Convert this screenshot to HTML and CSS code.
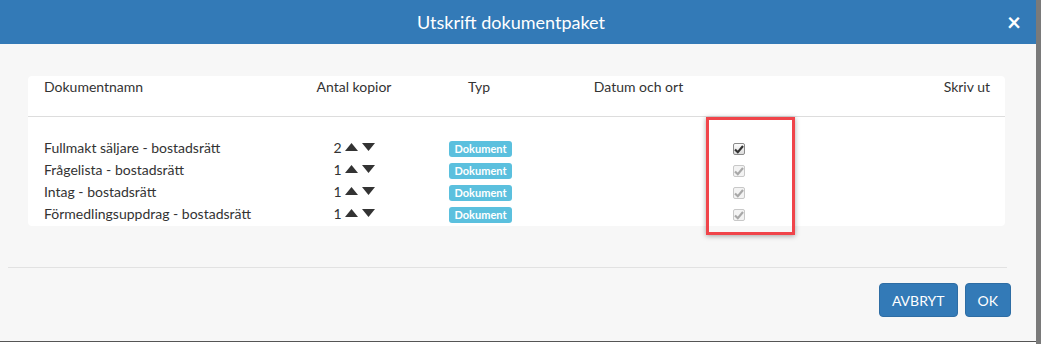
FILE: index.html
```html
<!DOCTYPE html>
<html lang="sv">
<head>
    <meta charset="UTF-8">
    <meta name="viewport" content="width=device-width, initial-scale=1.0">
    <title>Utskrift dokumentpaket</title>
    <link rel="stylesheet" href="styles.css">
</head>
<body>
    <div class="modal">
        <div class="modal-header">
            <h4 class="modal-title">Utskrift dokumentpaket</h4>
            <button class="close">&times;</button>
        </div>
        <div class="modal-body">
            <div class="card">
                <div class="row head">
                    <div class="col-name">Dokumentnamn</div>
                    <div class="col-center">Antal kopior</div>
                    <div class="col-center">Typ</div>
                    <div class="col-center">Datum och ort</div>
                    <div class="col-right">Skriv ut</div>
                </div>
                <div class="rows">
                    <div class="row">
                        <div class="col-name">Fullmakt säljare - bostadsrätt</div>
                        <div class="col-center copies">2<span class="arrows"><svg width="13" height="8" viewBox="0 0 13 8"><polygon points="0,8 6.5,0 13,8"/></svg><svg width="13" height="8" viewBox="0 0 13 8"><polygon points="0,0 13,0 6.5,8"/></svg></span></div>
                        <div class="col-center"><span class="label">Dokument</span></div>
                        <div></div>
                        <div class="col-check"><span class="check"><svg width="10" height="10" viewBox="0 0 10 10"><path d="M1 5.5 L3.8 8.2 L9 2"/></svg></span></div>
                    </div>
                    <div class="row">
                        <div class="col-name">Frågelista - bostadsrätt</div>
                        <div class="col-center copies">1<span class="arrows"><svg width="13" height="8" viewBox="0 0 13 8"><polygon points="0,8 6.5,0 13,8"/></svg><svg width="13" height="8" viewBox="0 0 13 8"><polygon points="0,0 13,0 6.5,8"/></svg></span></div>
                        <div class="col-center"><span class="label">Dokument</span></div>
                        <div></div>
                        <div class="col-check"><span class="check disabled"><svg width="10" height="10" viewBox="0 0 10 10"><path d="M1 5.5 L3.8 8.2 L9 2"/></svg></span></div>
                    </div>
                    <div class="row">
                        <div class="col-name">Intag - bostadsrätt</div>
                        <div class="col-center copies">1<span class="arrows"><svg width="13" height="8" viewBox="0 0 13 8"><polygon points="0,8 6.5,0 13,8"/></svg><svg width="13" height="8" viewBox="0 0 13 8"><polygon points="0,0 13,0 6.5,8"/></svg></span></div>
                        <div class="col-center"><span class="label">Dokument</span></div>
                        <div></div>
                        <div class="col-check"><span class="check disabled"><svg width="10" height="10" viewBox="0 0 10 10"><path d="M1 5.5 L3.8 8.2 L9 2"/></svg></span></div>
                    </div>
                    <div class="row">
                        <div class="col-name">Förmedlingsuppdrag - bostadsrätt</div>
                        <div class="col-center copies">1<span class="arrows"><svg width="13" height="8" viewBox="0 0 13 8"><polygon points="0,8 6.5,0 13,8"/></svg><svg width="13" height="8" viewBox="0 0 13 8"><polygon points="0,0 13,0 6.5,8"/></svg></span></div>
                        <div class="col-center"><span class="label">Dokument</span></div>
                        <div></div>
                        <div class="col-check"><span class="check disabled"><svg width="10" height="10" viewBox="0 0 10 10"><path d="M1 5.5 L3.8 8.2 L9 2"/></svg></span></div>
                    </div>
                </div>
                <div class="highlight"></div>
            </div>
        </div>
        <hr class="divider">
        <div class="modal-footer">
            <button class="btn">AVBRYT</button>
            <button class="btn">OK</button>
        </div>
    </div>
    <div class="page-peek"></div>
</body>
</html>
```

FILE: styles.css
```css
body {
    margin: 0;
    background-color: #7a7a7a;
    font-family: Lato, 'Liberation Sans', sans-serif;
    color: #333;
    font-size: 14px;
}
.modal {
    width: 1036px;
    height: 341px;
    background-color: #f7f7f7;
    box-sizing: border-box;
    position: relative;
}
.page-peek {
    width: 1036px;
    height: 3px;
    background-color: #fff;
    border-top: 1px solid #555;
    box-sizing: border-box;
}
.modal-header {
    height: 44px;
    background-color: #337ab7;
    display: flex;
    align-items: center;
    justify-content: center;
    padding-right: 14px;
    position: relative;
}
.modal-title {
    margin: 0;
    color: #fff;
    font-size: 18px;
    font-weight: normal;
}
.close {
    position: absolute;
    right: 15px;
    top: 10px;
    background: none;
    border: 0;
    padding: 0;
    color: #fff;
    font-family: Lato, sans-serif;
    font-weight: bold;
    font-size: 24px;
    line-height: 1;
}
.modal-body {
    padding: 32px 31px 0 28px;
}
.card {
    background-color: #fff;
    border-radius: 4px;
    position: relative;
}
.row {
    display: grid;
    grid-template-columns: 246px 128px 122px 197px 1fr;
    padding: 0 15px 0 16px;
    align-items: center;
    height: 22px;
    line-height: 22px;
}
.row.head {
    height: 41px;
    line-height: 18px;
    align-items: start;
    padding-top: 2px;
    box-sizing: border-box;
    border-bottom: 1px solid #ddd;
}
.rows {
    padding: 20px 0 1px;
}
.col-center {
    text-align: center;
}
.col-right {
    text-align: right;
}
.copies {
    display: flex;
    justify-content: center;
    align-items: center;
}
.arrows {
    display: flex;
    gap: 4px;
    margin-left: 3px;
    margin-top: -2px;
}
.arrows svg {
    fill: #333;
    display: block;
}
.label {
    display: inline-block;
    background-color: #5bc0de;
    color: #fff;
    font-size: 11px;
    font-weight: bold;
    line-height: 1;
    padding: 2px 5px 3px;
    border-radius: 3px;
    margin-left: 3px;
    vertical-align: middle;
}
.col-check {
    display: flex;
    align-items: center;
    margin-left: -4px;
}
.check {
    width: 12px;
    height: 12px;
    box-sizing: border-box;
    border: 1px solid #8a8a8a;
    border-radius: 2px;
    background: linear-gradient(#fcfcfc, #dcdcdc);
    display: flex;
    align-items: center;
    justify-content: center;
    margin-top: 1px;
}
.check svg path {
    fill: none;
    stroke: #333;
    stroke-width: 2.2;
}
.check.disabled {
    border-color: #c8c8c8;
    background: #f3f3f3;
}
.check.disabled svg path {
    stroke: #a8a8a8;
}
.highlight {
    position: absolute;
    left: 678px;
    top: 41px;
    width: 89px;
    height: 118px;
    box-sizing: border-box;
    border: 3px solid #f0444a;
    box-shadow: 0 1px 5px rgba(0,0,0,0.35);
}
.divider {
    margin: 41px 29px 0 8px;
    border: 0;
    border-top: 1px solid #e2e2e2;
}
.modal-footer {
    display: flex;
    justify-content: flex-end;
    gap: 7px;
    padding: 15px 25px 0 0;
}
.btn {
    height: 34px;
    padding: 0 12px;
    background-color: #337ab7;
    border: 1px solid #2e6da4;
    border-radius: 4px;
    color: #fff;
    font-family: Lato, sans-serif;
    font-size: 14px;
}
```
